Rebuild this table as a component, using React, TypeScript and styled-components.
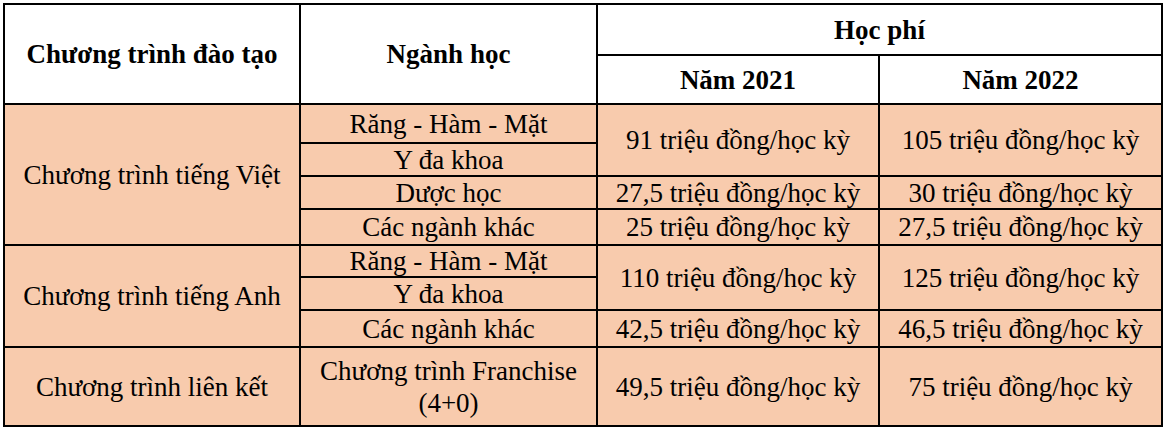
import React from "react";
import styled, { createGlobalStyle } from "styled-components";

interface FeeRow {
  major: string;
  fee2021?: string;
  fee2022?: string;
  feeSpan?: number;
}

interface Program {
  name: string;
  rows: FeeRow[];
}

const programs: Program[] = [
  {
    name: "Chương trình tiếng Việt",
    rows: [
      { major: "Răng - Hàm - Mặt", fee2021: "91 triệu đồng/học kỳ", fee2022: "105 triệu đồng/học kỳ", feeSpan: 2 },
      { major: "Y đa khoa" },
      { major: "Dược học", fee2021: "27,5 triệu đồng/học kỳ", fee2022: "30 triệu đồng/học kỳ" },
      { major: "Các ngành khác", fee2021: "25 triệu đồng/học kỳ", fee2022: "27,5 triệu đồng/học kỳ" },
    ],
  },
  {
    name: "Chương trình tiếng Anh",
    rows: [
      { major: "Răng - Hàm - Mặt", fee2021: "110 triệu đồng/học kỳ", fee2022: "125 triệu đồng/học kỳ", feeSpan: 2 },
      { major: "Y đa khoa" },
      { major: "Các ngành khác", fee2021: "42,5 triệu đồng/học kỳ", fee2022: "46,5 triệu đồng/học kỳ" },
    ],
  },
  {
    name: "Chương trình liên kết",
    rows: [
      { major: "Chương trình Franchise (4+0)", fee2021: "49,5 triệu đồng/học kỳ", fee2022: "75 triệu đồng/học kỳ" },
    ],
  },
];

const App = () => {
  // header takes grid rows 1-2, body starts at row 3
  let line = 3;

  return (
    <>
      <GlobalStyle />
      <Page>
        <FeeGrid>
          <HeadCell $row="1 / span 2" $col="1">Chương trình đào tạo</HeadCell>
          <HeadCell $row="1 / span 2" $col="2">Ngành học</HeadCell>
          <HeadCell $row="1" $col="3 / span 2">Học phí</HeadCell>
          <HeadCell $row="2" $col="3">Năm 2021</HeadCell>
          <HeadCell $row="2" $col="4">Năm 2022</HeadCell>

          {programs.map((program) => {
            const start = line;
            const cells = program.rows.map((row, i) => {
              const r = start + i;
              return (
                <React.Fragment key={row.major + r}>
                  <BodyCell $row={`${r}`} $col="2">{row.major}</BodyCell>
                  {row.fee2021 && (
                    <BodyCell $row={`${r} / span ${row.feeSpan ?? 1}`} $col="3">{row.fee2021}</BodyCell>
                  )}
                  {row.fee2022 && (
                    <BodyCell $row={`${r} / span ${row.feeSpan ?? 1}`} $col="4">{row.fee2022}</BodyCell>
                  )}
                </React.Fragment>
              );
            });
            line += program.rows.length;
            return (
              <React.Fragment key={program.name}>
                <BodyCell $row={`${start} / span ${program.rows.length}`} $col="1">
                  {program.name}
                </BodyCell>
                {cells}
              </React.Fragment>
            );
          })}
        </FeeGrid>
      </Page>
    </>
  );
};

const GlobalStyle = createGlobalStyle`
  html, body {
    margin: 0;
    padding: 0;
    background: #fff;
  }
`;

const Page = styled.div`
  padding: 3px;
  font-family: "Liberation Serif", "Times New Roman", serif;
  color: #000;
`;

const FeeGrid = styled.div`
  display: inline-grid;
  grid-template-columns: 294px 295px 280px 281px;
  grid-template-rows: 49px 47px 37px 31px 31px 34px 30px 31px 35px 77px;
  gap: 2px;
  padding: 2px;
  background: #000;
`;

const Cell = styled.div<{ $row: string; $col: string }>`
  grid-row: ${(p) => p.$row};
  grid-column: ${(p) => p.$col};
  display: flex;
  align-items: center;
  justify-content: center;
  text-align: center;
  font-size: 27px;
  line-height: 32px;
  padding: 0 12px;
`;

const HeadCell = styled(Cell)`
  background: #fff;
  font-weight: 700;
`;

const BodyCell = styled(Cell)`
  background: #f8cbad;
`;

export default App;
